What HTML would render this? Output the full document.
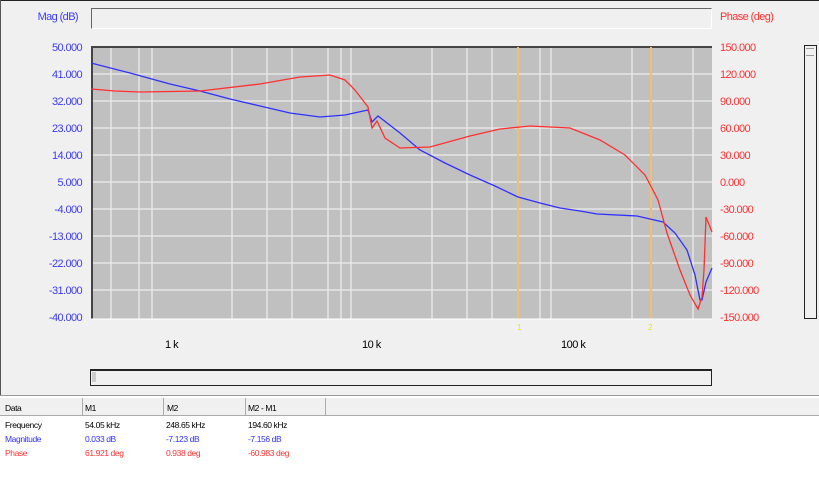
<!DOCTYPE html>
<html><head><style>
body{margin:0;width:819px;height:489px;background:#f0f0f0;font-family:"Liberation Sans",sans-serif;overflow:hidden;position:relative}
.l{position:absolute;font-size:11px;color:#3a3aff;text-align:right;width:80px;left:2px;letter-spacing:-0.6px}
.r{position:absolute;font-size:11px;color:#ff3030;left:720px;letter-spacing:-0.6px}
.x{position:absolute;font-size:11px;color:#000;top:339px;letter-spacing:-0.5px}
.t{position:absolute;font-size:8.5px;letter-spacing:-0.4px}
</style></head><body>
<div style="position:absolute;left:0;top:0;width:819px;height:1px;background:#222"></div>
<div style="position:absolute;left:0;top:0;width:1px;height:489px;background:#555"></div>
<div class="l" style="top:11px;left:-2px">Mag (dB)</div>
<div class="r" style="top:11px">Phase (deg)</div>
<div style="position:absolute;left:91px;top:8px;width:619px;height:19px;border:1px solid #666;border-bottom-color:#fff;border-right-color:#fff;background:#f0f0f0"></div>
<div class="l" style="top:42px">50.000</div><div class="l" style="top:69px">41.000</div><div class="l" style="top:96px">32.000</div><div class="l" style="top:123px">23.000</div><div class="l" style="top:150px">14.000</div><div class="l" style="top:177px">5.000</div><div class="l" style="top:204px">-4.000</div><div class="l" style="top:231px">-13.000</div><div class="l" style="top:258px">-22.000</div><div class="l" style="top:285px">-31.000</div><div class="l" style="top:312px">-40.000</div>
<div class="r" style="top:42px">150.000</div><div class="r" style="top:69px">120.000</div><div class="r" style="top:96px">90.000</div><div class="r" style="top:123px">60.000</div><div class="r" style="top:150px">30.000</div><div class="r" style="top:177px">0.000</div><div class="r" style="top:204px">-30.000</div><div class="r" style="top:231px">-60.000</div><div class="r" style="top:258px">-90.000</div><div class="r" style="top:285px">-120.000</div><div class="r" style="top:312px">-150.000</div>
<svg style="position:absolute;left:0;top:0" width="819" height="489">
<rect x="91" y="47" width="621" height="272" fill="#c0c0c0"/>
<g stroke="#e6e6e6" stroke-width="1.5">
<line x1="91" y1="74" x2="712" y2="74"/><line x1="91" y1="101" x2="712" y2="101"/><line x1="91" y1="128" x2="712" y2="128"/><line x1="91" y1="155" x2="712" y2="155"/><line x1="91" y1="182" x2="712" y2="182"/><line x1="91" y1="209" x2="712" y2="209"/><line x1="91" y1="236" x2="712" y2="236"/><line x1="91" y1="263" x2="712" y2="263"/><line x1="91" y1="290" x2="712" y2="290"/>
<line x1="111" y1="47" x2="111" y2="319"/><line x1="139" y1="47" x2="139" y2="319"/><line x1="152" y1="47" x2="152" y2="319"/><line x1="232" y1="47" x2="232" y2="319"/><line x1="267" y1="47" x2="267" y2="319"/><line x1="292" y1="47" x2="292" y2="319"/><line x1="328" y1="47" x2="328" y2="319"/><line x1="341" y1="47" x2="341" y2="319"/><line x1="351" y1="47" x2="351" y2="319"/>
<line x1="432" y1="47" x2="432" y2="319"/><line x1="467" y1="47" x2="467" y2="319"/><line x1="492" y1="47" x2="492" y2="319"/><line x1="540" y1="47" x2="540" y2="319"/><line x1="551" y1="47" x2="551" y2="319"/><line x1="632" y1="47" x2="632" y2="319"/><line x1="693" y1="47" x2="693" y2="319"/>
</g>
<line x1="91" y1="47" x2="712" y2="47" stroke="#444" stroke-width="2"/>
<line x1="92" y1="47" x2="92" y2="319" stroke="#444" stroke-width="2"/>
<line x1="518" y1="47" x2="518" y2="319" stroke="#f0c070" stroke-width="2"/>
<line x1="651" y1="47" x2="651" y2="319" stroke="#f0c070" stroke-width="2"/>
<polyline fill="none" stroke="#3030ff" stroke-width="1.3" points="91,63 130,73 170,84 200,91 230,99 260,106 290,113 320,117 345,115 368,110 372,122 378,116 400,133 420,150 445,163 470,175 495,186 518,197 540,203 560,208 580,211 597,214 637,216 663,222 675,233 687,250 695,275 700,300 702,300 706,282 712,268"/>
<polyline fill="none" stroke="#ff3030" stroke-width="1.3" points="91,89 115,91 140,92 200,91 260,84 300,77 330,75 345,80 355,90 368,107 372,128 377,121 385,138 400,148 430,147 470,136 500,129 530,126 570,128 600,140 625,155 645,175 658,200 667,233 680,270 690,295 698,309 702,297 704,270 706,217 712,232"/>
<line x1="91" y1="319" x2="712" y2="319" stroke="#fff"/>
<text x="517" y="330" font-size="8" fill="#e8e800" font-family="Liberation Sans">1</text>
<text x="648" y="330" font-size="8" fill="#e8e800" font-family="Liberation Sans">2</text>
</svg>
<div class="x" style="left:165px">1 k</div>
<div class="x" style="left:362px">10 k</div>
<div class="x" style="left:561px">100 k</div>
<div style="position:absolute;left:90px;top:369px;width:620px;height:14px;border:1px solid #222;border-top-width:2px;background:#f0f0f0"></div>
<div style="position:absolute;left:92px;top:372px;width:4px;height:10px;background:#ccc"></div>
<div style="position:absolute;left:804px;top:45px;width:11px;height:272px;border:1px solid #222;background:#f0f0f0"></div>
<div style="position:absolute;left:806px;top:48px;width:8px;height:6px;border-top:1px solid #999;border-bottom:1px solid #999"></div>
<div style="position:absolute;left:0;top:395px;width:819px;height:94px;background:#fff;border-top:1px solid #999"></div>
<div style="position:absolute;left:0;top:398px;width:819px;height:17px;background:#f0f0f0;border-bottom:1px solid #aaa"></div>
<div style="position:absolute;left:82px;top:398px;width:1px;height:17px;background:#aaa"></div>
<div style="position:absolute;left:163px;top:398px;width:1px;height:17px;background:#aaa"></div>
<div style="position:absolute;left:245px;top:398px;width:1px;height:17px;background:#aaa"></div>
<div style="position:absolute;left:325px;top:398px;width:1px;height:17px;background:#aaa"></div>
<div class="t" style="top:403px;left:5px">Data</div>
<div class="t" style="top:403px;left:85px">M1</div>
<div class="t" style="top:403px;left:167px">M2</div>
<div class="t" style="top:403px;left:248px">M2 - M1</div>
<div class="t" style="top:418px;left:5px;line-height:14px">Frequency<br><span style="color:#3030ff">Magnitude</span><br><span style="color:#ff3030">Phase</span></div>
<div class="t" style="top:418px;left:85px;line-height:14px">54.05 kHz<br><span style="color:#3030ff">0.033 dB</span><br><span style="color:#ff3030">61.921 deg</span></div>
<div class="t" style="top:418px;left:166px;line-height:14px">248.65 kHz<br><span style="color:#3030ff">-7.123 dB</span><br><span style="color:#ff3030">0.938 deg</span></div>
<div class="t" style="top:418px;left:248px;line-height:14px">194.60 kHz<br><span style="color:#3030ff">-7.156 dB</span><br><span style="color:#ff3030">-60.983 deg</span></div>
</body></html>
